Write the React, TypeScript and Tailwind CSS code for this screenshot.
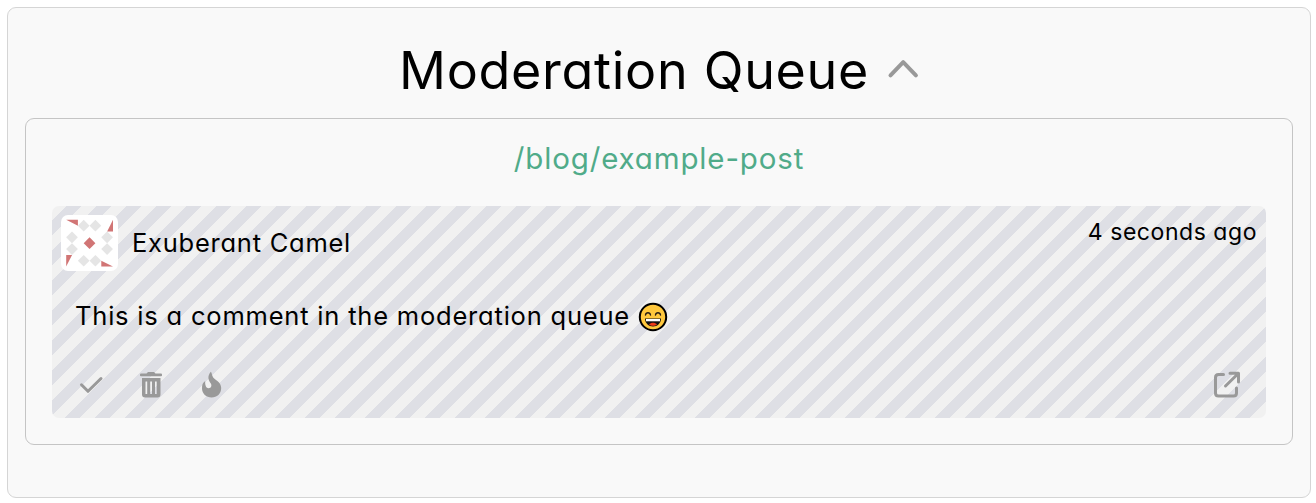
import React from "react";

const Chevron = () => (
  <svg className="h-8 w-8 text-[#999]" viewBox="0 0 32 32" fill="none" stroke="currentColor" strokeWidth="4" strokeLinecap="round" strokeLinejoin="round">
    <path d="M3.5 21.300 16.2 8.200 28.9 21.300" />
  </svg>
);

const Avatar = () => (
  <svg className="h-[56px] w-[57px]" viewBox="0 0 57 56" preserveAspectRatio="none">
    <rect width="57" height="56" rx="7" fill="#fff" />
    <g fill="#e5e5e5">
      <path d="M22.7 4.8l5.85 5.85-5.85 5.85-5.85-5.85zM34.4 4.8l5.85 5.85-5.85 5.85-5.85-5.85zM22.7 39.9l5.85 5.85-5.85 5.85-5.85-5.85zM34.4 39.9l5.85 5.85-5.85 5.85-5.85-5.85z" />
      <path d="M11 16.5l5.85 5.85L11 28.2l-5.85-5.85zM11 28.2l5.85 5.85L11 39.9l-5.85-5.85zM46.1 16.5l5.85 5.85-5.85 5.85-5.85-5.85zM46.1 28.2l5.85 5.85-5.85 5.85-5.85-5.85z" />
    </g>
    <path fill="#d17575" d="M5.2 4.8h11.7v5.85zM52 4.8v11.7h-5.85zM52 51.6H40.3v-5.85zM5.2 51.6V39.9h5.85zM28.55 22.3l5.85 5.85-5.85 5.85-5.85-5.85z" />
  </svg>
);

const Smile = () => (
  <svg className="h-[30px] w-[30px]" viewBox="0 0 30 30">
    <circle cx="15" cy="15" r="13.2" fill="#ffc83d" stroke="#000" strokeWidth="2" />
    <path d="M7.500 13c.5-3 4.500-3 5 0M17.500 13c.5-3 4.500-3 5 0" fill="none" stroke="#2a2015" strokeWidth="1.400" strokeLinecap="round" />
    <path d="M7 16.500h16c0 4.500-3.500 8-8 8s-8-3.500-8-8z" fill="#111" />
    <path d="M8 17h14v2.300H8z" fill="#fff" />
    <path d="M11 22.500c2-2.500 6-2.500 8 0-2 1.800-6 1.800-8 0z" fill="#f03a17" />
  </svg>
);

const Check = () => (
  <svg className="h-[30px] w-[30px]" viewBox="0 0 30 30" fill="none" stroke="#999" strokeWidth="3" strokeLinecap="round" strokeLinejoin="round">
    <path d="M5.500 14.800l6.500 6.500L25 8.500" />
  </svg>
);

const Trash = () => (
  <svg className="h-[30px] w-[30px]" viewBox="0 0 30 30" fill="#999">
    <path fillRule="evenodd" d="M5 3.500h5.500L12 2h6l1.500 1.500H25q1 0 1 1V5.500q0 .8-1 .8H5Q4 6.300 4 5.500V4.500q0-1 1-1zM6 8h18.500v16.500q0 3-3 3H9q-3 0-3-3zM9.500 11.500v12.500h1.700V11.500zM14.200 11.500v12.500h1.800V11.500zM19 11.500v12.500h1.700V11.500z" />
  </svg>
);

const Flame = () => (
  <svg className="h-[30px] w-[30px]" viewBox="0 0 30 30" fill="#999">
    <path d="M14.800 1.800c1.200 1 .9 3.700 2.400 5.700 2.200 2.800 8 4.700 8 10.500 0 5.700-4.300 9.500-9.600 9.500S6 23.500 6 18.500c0-3.500 .6-5.800 3.200-7.500-.2 2.500 .2 7.300 3.400 7.300 2.800 0 3.400-2.800 2.200-4.700-2.200-3.300-4-7 0-11.800z" />
  </svg>
);

const External = () => (
  <svg className="h-[30px] w-[30px]" viewBox="0 0 30 30" fill="none" stroke="#999" strokeWidth="3" strokeLinecap="round" strokeLinejoin="round">
    <path d="M12.500 4.500H7.500Q4.500 4.500 4.500 7.500v15.500Q4.500 26 7.500 26h15q3 0 3-3V18M19 3.200H27.500V12M27 3.700 14.500 16" />
  </svg>
);

const comment = { author: "Exuberant Camel", age: "4 seconds ago", body: "This is a comment in the moderation queue" };

export default function App() {
  return (
    <main className="h-[503px] bg-white pt-[7px] pl-[7px] pr-[5px] font-['Inter',sans-serif] text-black [font-feature-settings:'cv11']">
      <section className="flex h-[491px] flex-col rounded-[9px] border border-[#d5d5d5] bg-[#f9f9f9] px-[17px]">
        <header className="flex h-[110px] shrink-0 items-center justify-center gap-[19px] pt-[14px]">
          <h1 className="w-[469px] whitespace-nowrap pt-[2px] text-[52px] leading-[62px] tracking-[0.7px]">Moderation Queue</h1>
          <Chevron />
        </header>
        <article className="h-[327px] rounded-[9px] border border-[#c5c5c5] px-[26px]">
          <h2 className="flex h-[87px] justify-center pt-[18px] text-[29.5px] leading-[42px] tracking-[0.85px] text-[#50ab89]">/blog/example-post</h2>
          <div className="flex h-[212px] flex-col rounded-[7px] bg-[linear-gradient(135deg,#f1f1f1_25%,#dedfe5_25%,#dedfe5_50%,#f1f1f1_50%,#f1f1f1_75%,#dedfe5_75%)] bg-[length:30px_30px] px-[9px] pt-[9px]">
            <div className="flex h-[57px] justify-between">
              <div className="flex h-[56px] items-center gap-[14px]">
                <Avatar />
                <span className="text-[25.5px] leading-[36px] tracking-[0.75px]">{comment.author}</span>
              </div>
              <span className="text-[23px] leading-[34px] tracking-[0.55px]">{comment.age}</span>
            </div>
            <div className="flex h-[89px] items-center gap-[9px] pl-[14px]">
              <p className="w-[554px] whitespace-nowrap text-[25.5px] tracking-[0.8px]">{comment.body}</p>
              <Smile />
            </div>
            <div className="flex items-center justify-between pr-[16px] pl-[15px] pt-[9px]">
              <div className="flex gap-[30px]">
                <Check />
                <Trash />
                <Flame />
              </div>
              <External />
            </div>
          </div>
        </article>
      </section>
    </main>
  );
}
